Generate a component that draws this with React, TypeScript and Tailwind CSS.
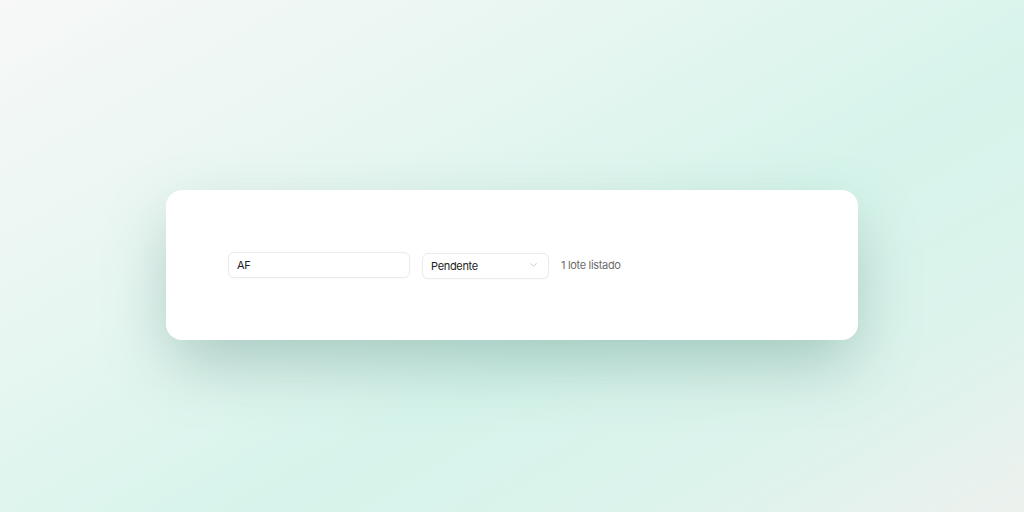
import { useState } from "react";
import { ChevronDown } from "lucide-react";

const STATUS_OPTIONS = ["Pendente", "Aprovado", "Rejeitado"];

export default function App() {
  const [query, setQuery] = useState("AF");
  const [status, setStatus] = useState("Pendente");
  const count = 1;

  return (
    <div
      className="h-[512px] w-full flex items-center justify-center bg-[linear-gradient(150deg,#f7f8f7_0%,#e6f6f1_35%,#d6f4eb_60%,#dcf3ec_80%,#edf1ee_100%)]"
      style={{ fontFamily: "Inter, 'Liberation Sans', sans-serif" }}
    >
      <div className="mt-[18px] w-[692px] h-[150px] rounded-[16px] bg-white shadow-[0_26px_64px_-6px_rgba(60,120,105,0.36)] flex items-center px-[62px]">
        <div className="flex items-center gap-3 tracking-[-0.02em]">
          <input
            value={query}
            onChange={(e) => setQuery(e.target.value)}
            className="w-[182px] h-[26px] rounded-[6px] border border-[#ebebeb] bg-white px-[8px] text-[11px] text-[#222] outline-none shadow-[0_1px_2px_rgba(0,0,0,0.03)]"
          />
          <div className="relative w-[127px] h-[26px]">
            <select
              value={status}
              onChange={(e) => setStatus(e.target.value)}
              className="appearance-none w-full h-full rounded-[6px] border border-[#ebebeb] bg-white pl-[8px] pr-6 text-[11px] text-[#222] outline-none shadow-[0_1px_2px_rgba(0,0,0,0.03)]"
            >
              {STATUS_OPTIONS.map((s) => (
                <option key={s}>{s}</option>
              ))}
            </select>
            <ChevronDown
              size={11}
              strokeWidth={1.5}
              className="pointer-events-none absolute right-[10px] top-1/2 -translate-y-1/2 text-[#b5b5b5]"
            />
          </div>
          <span className="text-[11px] leading-[26px] text-[#6b6b6b]">
            {count} lote listado
          </span>
        </div>
      </div>
    </div>
  );
}
